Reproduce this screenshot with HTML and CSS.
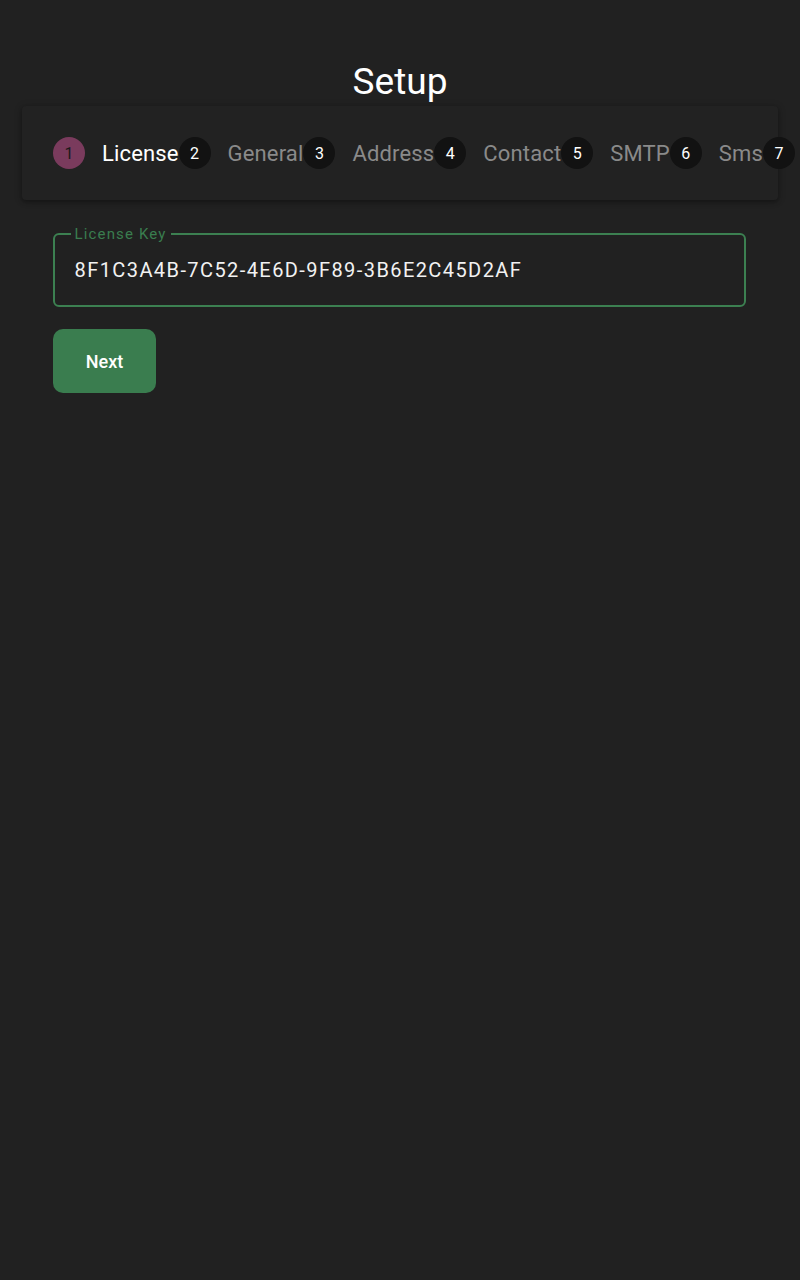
FILE: index.html
```html
<!DOCTYPE html>
<html lang="en">
<head>
<meta charset="utf-8">
<title>Setup</title>
<link rel="stylesheet" href="styles.css">
</head>
<body>
<h1 class="title">Setup</h1>
<div class="card">
  <div class="steps">
    <div class="step active"><span class="num">1</span><span class="label">License</span></div>
    <div class="step"><span class="num">2</span><span class="label">General</span></div>
    <div class="step"><span class="num">3</span><span class="label">Address</span></div>
    <div class="step"><span class="num">4</span><span class="label">Contact</span></div>
    <div class="step"><span class="num">5</span><span class="label">SMTP</span></div>
    <div class="step"><span class="num">6</span><span class="label">Sms</span></div>
    <div class="step"><span class="num">7</span></div>
  </div>
</div>
<div class="field">
  <span class="field-label">License Key</span>
  <span class="field-value">8F1C3A4B-7C52-4E6D-9F89-3B6E2C45D2AF</span>
</div>
<button class="btn">Next</button>
</body>
</html>
```
FILE: styles.css
```css
html, body {
  margin: 0;
  padding: 0;
  background: #212121;
  font-family: Roboto, "Noto Sans", "Liberation Sans", sans-serif;
  color: #ffffff;
}
.title {
  margin: 0;
  padding-top: 60px;
  font-size: 37px;
  line-height: 44px;
  font-weight: 400;
  text-align: center;
  color: #ffffff;
}
.card {
  margin: 2px 22px 0;
  padding: 31px;
  background: #222222;
  border-radius: 4px;
  box-shadow: 0 2px 4px rgba(0,0,0,0.3), 0 1px 8px rgba(0,0,0,0.15);
  overflow: visible;
}
.steps {
  display: flex;
  flex-wrap: nowrap;
  align-items: center;
  height: 32px;
  white-space: nowrap;
}
.step {
  display: flex;
  align-items: center;
  flex: none;
}
.num {
  width: 32px;
  height: 32px;
  border-radius: 50%;
  background: #121212;
  color: #ffffff;
  font-size: 16px;
  display: flex;
  align-items: center;
  justify-content: center;
  flex: none;
}
.step.active .num {
  background: #7a3b5d;
  color: #1a1a1a;
}
.label {
  margin-left: 17px;
  font-size: 22px;
  letter-spacing: 0.15px;
  color: #8a8a8a;
}
.step.active .label {
  color: #ffffff;
}
.field {
  position: relative;
  margin: 33px 54px 0 53px;
  height: 74px;
  box-sizing: border-box;
  border: 2.5px solid #3c8051;
  border-radius: 6px;
  display: flex;
  align-items: center;
  padding-left: 19.5px;
}
.field-label {
  position: absolute;
  left: 15.5px;
  top: -11.5px;
  padding: 0 4px;
  background: #212121;
  color: #3a7d4f;
  font-size: 15px;
  line-height: 20px;
  letter-spacing: 1.15px;
}
.field-value {
  font-size: 20px;
  letter-spacing: 1.42px;
  color: #f2f2f2;
}
.btn {
  display: block;
  margin: 22px 0 0 53px;
  width: 103px;
  height: 64px;
  border: none;
  border-radius: 10px;
  background: #3a7d4f;
  color: #ffffff;
  font-family: Roboto, "Noto Sans", "Liberation Sans", sans-serif;
  font-size: 18px;
  font-weight: 500;
  cursor: pointer;
}
```
